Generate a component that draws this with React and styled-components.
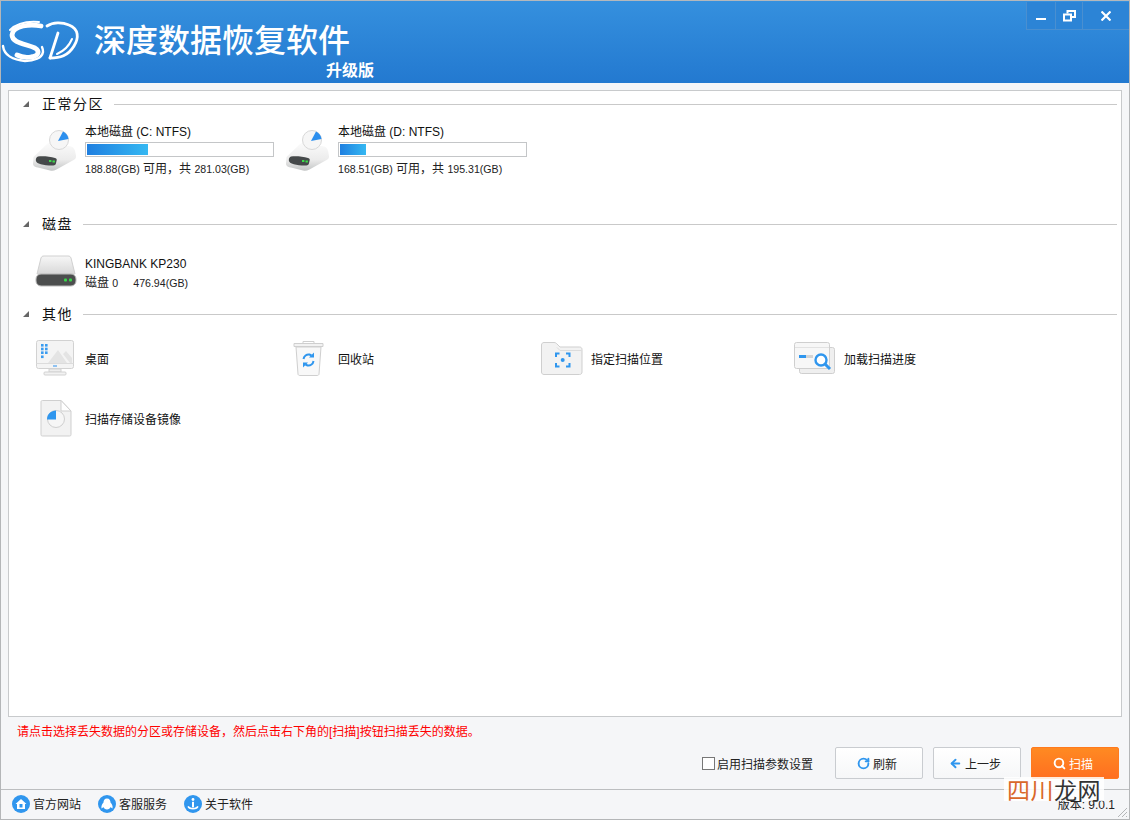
import React from 'react';
import styled, { createGlobalStyle } from 'styled-components';
import { Search, ArrowLeft, RotateCw } from 'lucide-react';

const GlobalStyle = createGlobalStyle`
    html, body {
        margin: 0;
        padding: 0;
        background: #f5f6f8;
    }
    * {
        box-sizing: border-box;
    }
`;

const Window = styled.div`
    position: relative;
    display: flex;
    flex-direction: column;
    width: 1130px;
    height: 820px;
    overflow: hidden;
    background: #f5f6f8;
    color: #111;
    font-family: "Liberation Sans", "Noto Sans CJK SC", sans-serif;
    font-size: 12px;
    border-left: 1px solid #b4b6b8;
    border-right: 1px solid #b4b6b8;
    border-bottom: 1px solid #b4b6b8;
`;

const Header = styled.header`
    display: flex;
    flex: 0 0 83px;
    padding-top: 1px;
    border-top: 1px solid #b4b8bc;
    background: linear-gradient(#3590de, #2379d0);
    color: #fff;
`;

const Logo = styled.svg`
    flex: 0 0 auto;
    width: 82px;
    height: 44px;
    margin-top: 18px;
`;

const TitleBlock = styled.div`
    display: flex;
    flex-direction: column;
    align-items: flex-end;
    width: 280px;
    margin-left: 11px;
    padding-top: 14px;
`;

const Title = styled.h1`
    align-self: flex-start;
    margin: 0;
    font-family: "Noto Sans CJK SC", sans-serif;
    font-size: 32px;
    line-height: 44px;
    font-weight: 500;
    white-space: nowrap;
`;

const Edition = styled.span`
    margin-top: -1px;
    font-family: "Noto Sans CJK SC", sans-serif;
    font-size: 16px;
    line-height: 20px;
    font-weight: 700;
`;

const Controls = styled.div`
    display: flex;
    height: 28px;
    margin-left: auto;
    border: 1px solid #4a8fd0;
    border-top: 0;
    border-right: 0;
    background: #2c84d6;
`;

const ControlButton = styled.div`
    display: flex;
    align-items: center;
    justify-content: center;
    width: ${props => props.$width}px;
    border-left: ${props => props.$first ? 0 : '1px solid #4a8fd0'};
`;

const Panel = styled.main`
    display: flex;
    flex-direction: column;
    height: 627px;
    margin: 7px 7px 0 7px;
    background: #fff;
    border: 1px solid #c8cacc;
`;

const Section = styled.section`
    height: ${props => props.$height}px;
`;

const SectionHead = styled.div`
    display: flex;
    align-items: center;
    height: 24px;
    padding-left: 14px;
    padding-right: 4px;
`;

const Triangle = styled.i`
    display: block;
    width: 0;
    height: 0;
    border-left: 6px solid transparent;
    border-bottom: 6px solid #666;
    margin-right: 13px;
    margin-top: 1px;
`;

const SectionTitle = styled.h2`
    margin: 0 10px 0 0;
    font-size: 14px;
    font-weight: 400;
    letter-spacing: 1.5px;
    font-family: "Noto Sans CJK SC", sans-serif;
    color: #111;
`;

const Rule = styled.div`
    flex: 1;
    height: 1px;
    margin-top: 2px;
    background: #c9c9c9;
`;

const Grid = styled.div`
    display: grid;
    grid-template-columns: repeat(4, 253px);
    padding-left: 22px;
    padding-top: ${props => props.$top || 0}px;
`;

const Drive = styled.div`
    display: flex;
    align-items: flex-start;
    height: 60px;
`;

const Place = styled.div`
    display: flex;
    align-items: center;
    height: 60px;
`;

const IconSlot = styled.div`
    flex: 0 0 54px;
    display: flex;
    justify-content: center;
    padding-right: 4px;
    margin-top: ${props => props.$top || 0}px;
`;

const DriveInfo = styled.div`
    width: 189px;
    padding-top: ${props => props.$top || 0}px;
`;

const DriveName = styled.div`
    line-height: 16px;
    color: #111;
`;

const Meter = styled.div`
    height: 15px;
    margin-top: 2px;
    padding: 1px;
    background: #fff;
    border: 1px solid #c4c6c8;
`;

const MeterFill = styled.div`
    height: 100%;
    background: linear-gradient(90deg, #1f7fe0, #35b8f2);
`;

const DriveStat = styled.div`
    margin-top: ${props => props.$gap}px;
    line-height: 16px;
    color: #222;
    white-space: pre;
`;

const Num = styled.span`
    font-size: 10.6px;
    margin-left: ${props => props.$left || 0}px;
`;

const Actions = styled.div`
    flex: 1;
    display: flex;
    flex-direction: column;
    padding: 7px 10px 0 16px;
`;

const Notice = styled.p`
    margin: 0;
    line-height: 17px;
    color: #f00;
    white-space: nowrap;
`;

const ActionRow = styled.div`
    display: flex;
    align-items: center;
    justify-content: flex-end;
    gap: 10px;
    margin-top: 6px;
`;

const CheckLabel = styled.label`
    display: flex;
    align-items: center;
    margin-right: 12px;
    color: #222;
`;

const CheckBox = styled.span`
    display: block;
    width: 13px;
    height: 13px;
    margin-right: 2px;
    background: #fff;
    border: 1px solid #777;
`;

const Button = styled.div`
    display: flex;
    align-items: center;
    justify-content: center;
    gap: 3px;
    width: 88px;
    height: 32px;
    padding-right: 4px;
    border-radius: 2px;
    border: 1px solid ${props => props.$primary ? '#ff7a1e' : '#c9ccd0'};
    background: ${props => props.$primary
        ? 'linear-gradient(#ff8a22, #ff6f20)'
        : 'linear-gradient(#ffffff, #f6f7f8)'};
    color: ${props => props.$primary ? '#fff' : '#222'};
`;

const StatusBar = styled.footer`
    display: flex;
    align-items: center;
    flex: 0 0 30px;
    padding: 0 14px 2px 11px;
    border-top: 1px solid #bcbec0;
`;

const StatusLink = styled.div`
    display: flex;
    align-items: center;
    gap: 3px;
    width: 86px;
    color: #222;
`;

const Version = styled.span`
    margin-left: auto;
    color: #222;
`;

const Grip = styled.svg`
    position: absolute;
    right: 1px;
    bottom: 1px;
    width: 11px;
    height: 11px;
`;

const Watermark = styled.div`
    position: absolute;
    left: 1003px;
    top: 777px;
    padding: 0 3px;
    height: 24px;
    background: rgba(255, 255, 255, 0.85);
    font-family: "Noto Sans CJK SC", sans-serif;
    font-size: 23px;
    line-height: 24px;
    letter-spacing: 0.5px;
    color: #333;
    b {
        font-weight: 400;
        color: #d9682a;
    }
`;

const SdLogo = () => (
    <Logo viewBox="0 0 82 44" fill="none" stroke="#fff" strokeLinecap="round">
        <path d="M40 6C30 4 12 5 11 15c0 8 14 9 23 13 5 3 4 8-4 9-5 1-10 0-14-2" strokeWidth="4.8" />
        <path d="M2 26c1 9 10 14 22 15 9 0 17-3 18-9 0-2 0-3-1-5" strokeWidth="2.4" />
        <path d="M9 10C15 4 26 1 38 2" strokeWidth="2" />
        <path d="M57 13 49 38" strokeWidth="2.8" />
        <path d="M49 38c10 0 18-2 24-12 5-8 5-17-5-21-7-3-16-3-22 1" strokeWidth="2.8" />
        <path d="M56 34c7-3 12-8 15-15" strokeWidth="2" />
    </Logo>
);

const PartitionIcon = () => (
    <svg width="48" height="44" viewBox="0 0 48 44">
        <defs>
            <linearGradient id="partBody" x1="0" y1="0" x2="0" y2="1">
                <stop offset="0" stopColor="#fbfbfb" />
                <stop offset=".6" stopColor="#ececec" />
                <stop offset="1" stopColor="#c4c6c6" />
            </linearGradient>
        </defs>
        <path d="M1.500 29 15 16c1.500-1.300 3-1.500 5-1.200l18 3.500c3 .6 4 2 5 4.500l1 5c.3 2-.5 3-2 4l-18 10c-2 1-4 1-6 .7l-10-2.500C2 39 1 37.500 1 35.500Z" fill="url(#partBody)" />
        <path d="M6 28.500c5-.6 12 0 17 1.500 2 .6 2 1.500 1.500 3l-.7 3c-.5 1.300-2 1.500-4 1.500-4 0-8-.5-11-1.300-3-.7-5-2-5-4 0-2 1-3.500 2.200-3.700Z" fill="#45494a" />
        <rect x="17" y="32" width="2.400" height="2" fill="#3ddc4b" />
        <rect x="20.500" y="32.500" width="2.400" height="2" fill="#3ddc4b" />
        <circle cx="27" cy="12" r="9.500" fill="#f6f6f6" stroke="#d8d8d8" />
        <path d="M26 13 31 3.500c3 1.300 5 4 5.500 7.500Z" fill="#2c8fee" />
    </svg>
);

const DiskIcon = () => (
    <svg width="42" height="32" viewBox="0 0 42 32">
        <defs>
            <linearGradient id="diskBody" x1="0" y1="0" x2="0" y2="1">
                <stop offset="0" stopColor="#f7f7f7" />
                <stop offset="1" stopColor="#d8d8d8" />
            </linearGradient>
        </defs>
        <path d="M6 3c.4-1.400 1.600-2 3-2h24c1.400 0 2.600.6 3 2l4 16H2Z" fill="url(#diskBody)" stroke="#d0d0d0" />
        <rect x="1" y="19" width="40" height="12" rx="5" fill="#4c4e4e" stroke="#bbb" />
        <rect x="29" y="23.500" width="3" height="3" rx="1" fill="#38d84a" />
        <rect x="34" y="23.500" width="3" height="3" rx="1" fill="#38d84a" />
    </svg>
);

const DesktopIcon = () => (
    <svg width="40" height="36" viewBox="0 0 40 36">
        <rect x=".5" y=".5" width="37" height="28" rx="2" fill="#f4f4f4" stroke="#d2d2d2" />
        <path d="M.5 23.500h37" stroke="#dcdcdc" />
        <path d="M12 23 22 10l9 13ZM27 14l3-3 6 7v5h-2Z" fill="#e4e4e4" />
        {[4, 7.700, 11.400].map(y => (
            <g key={y} fill="#3a9cf0">
                <rect x="5" y={y} width="2.600" height="2.600" />
                <rect x="9" y={y} width="2.600" height="2.600" />
            </g>
        ))}
        <rect x="5" y="15.500" width="2.600" height="2.600" fill="#3a9cf0" />
        <rect x="17" y="25.500" width="4" height="1" fill="#2c8fee" />
        <path d="M13 29h12v3H13Z" fill="#eee" stroke="#d2d2d2" />
        <rect x="8" y="32" width="22" height="3" rx="1" fill="#f2f2f2" stroke="#d2d2d2" />
    </svg>
);

const RecycleIcon = () => (
    <svg width="32" height="36" viewBox="0 0 32 36">
        <path d="M10 3V1.500h11V3" fill="none" stroke="#cfcfcf" />
        <path d="M1 3.500h29v3H1Z" fill="#f2f2f2" stroke="#cfcfcf" />
        <path d="M3 7h25l-2 27c0 1-1 1.500-2 1.500H7c-1 0-2-.5-2-1.500Z" fill="#f8f8f8" stroke="#cfcfcf" />
        <path d="M10.500 19c.5-3 3-5 6-4.500l2 1" fill="none" stroke="#2f96ee" strokeWidth="2" />
        <path d="M21 12.500v5h-5Z" fill="#2f96ee" />
        <path d="M20.500 21c-.5 3-3 5-6 4.500l-2-1" fill="none" stroke="#2f96ee" strokeWidth="2" />
        <path d="M10 27.500v-5h5Z" fill="#2f96ee" />
    </svg>
);

const FolderIcon = () => (
    <svg width="42" height="33" viewBox="0 0 42 33">
        <path d="M.5 3C.5 1.500 1.500.5 3 .5h10c1.500 0 2 .5 3 1.500l3 3h19.500c1.500 0 2.500 1 2.500 2.500V30c0 1.500-1 2.500-2.500 2.500H3C1.500 32.500.5 31.500.5 30Z" fill="#f2f2f2" stroke="#cfcfcf" />
        <path d="M16 5.500 19 8.500h21.500" fill="none" stroke="#dcdcdc" />
        <path d="M15 15v-3.500h3.500M25 11.500h3.500V15M28.500 21v3.500H25M18.500 24.500H15V21" fill="none" stroke="#2f96ee" strokeWidth="2" />
        <circle cx="21.700" cy="18" r="2" fill="#2f96ee" />
    </svg>
);

const LoadIcon = () => (
    <svg width="42" height="33" viewBox="0 0 42 33">
        <rect x="5.500" y="5.500" width="35" height="26" rx="2" fill="#efefef" stroke="#cfcfcf" />
        <rect x=".5" y=".5" width="35" height="26" rx="2" fill="#f7f7f7" stroke="#cfcfcf" />
        <path d="M1 5.500h34" stroke="#e2e2e2" />
        <rect x="5" y="13" width="7" height="3" fill="#2f96ee" />
        <rect x="12" y="13" width="7" height="3" fill="#d4d4d4" />
        <circle cx="27" cy="18" r="5.500" fill="#fff" stroke="#2f96ee" strokeWidth="2.400" />
        <path d="m31 22 5 5" stroke="#2f96ee" strokeWidth="3" />
    </svg>
);

const ImageIcon = () => (
    <svg width="32" height="37" viewBox="0 0 32 37">
        <path d="M1 2c0-1 .5-1.500 1.500-1.500H21L31 11v23.500c0 1-.5 1.500-1.500 1.500h-27C1.500 36 1 35.500 1 34.500Z" fill="#f2f2f2" stroke="#cfcfcf" />
        <path d="M21 .5V11h10Z" fill="#fff" stroke="#cfcfcf" />
        <circle cx="16" cy="19" r="8.500" fill="#f6f6f6" stroke="#cfcfcf" />
        <path d="M7 19.500C7 14 11 10.500 16 10.500v9Z" fill="#2f96ee" />
    </svg>
);

const HomeGlyph = () => (
    <path d="M9 4 3.500 9H5v5h8V9h1.500ZM7.500 12.500V9h3v3.500Z" fill="#fff" fillRule="evenodd" />
);

const ServiceGlyph = () => (
    <path d="M9 3.500c2.500 0 3.500 2 3.500 4 1.500 1.500 2.500 3.500 2 6-1-.5-1.500-1-1.800-1.500-.7 1.500-2 2.500-3.700 2.500S6 13.500 5.300 12c-.3.500-.8 1-1.800 1.500-.5-2.500.5-4.500 2-6 0-2 1-4 3.500-4Z" fill="#fff" />
);

const InfoGlyph = () => (
    <g fill="#fff">
        <circle cx="9" cy="4.500" r="1.400" />
        <rect x="8" y="6.800" width="2" height="5.500" />
        <path d="M3.500 11.500c0 2 2.500 3 5.500 3s5.500-1 5.500-3l-1.500-.5c0 1-2 1.800-4 1.800S5 12 5 11Z" />
    </g>
);

const StatusIcon = ({ children }) => (
    <svg width="18" height="18" viewBox="0 0 18 18">
        <circle cx="9" cy="9" r="9" fill="#3096ee" />
        {children}
    </svg>
);

const drives = [
    { name: '本地磁盘 (C: NTFS)', used: 33, free: '188.88(GB)', total: '281.03(GB)' },
    { name: '本地磁盘 (D: NTFS)', used: 14, free: '168.51(GB)', total: '195.31(GB)' },
];

const places = [
    { name: '桌面', icon: <DesktopIcon /> },
    { name: '回收站', icon: <RecycleIcon /> },
    { name: '指定扫描位置', icon: <FolderIcon /> },
    { name: '加载扫描进度', icon: <LoadIcon /> },
    { name: '扫描存储设备镜像', icon: <ImageIcon /> },
];

const Head = ({ title }) => (
    <SectionHead>
        <Triangle />
        <SectionTitle>{title}</SectionTitle>
        <Rule />
    </SectionHead>
);

const App = () => {
    return (
        <Window>
            <GlobalStyle />
            <Header>
                <SdLogo />
                <TitleBlock>
                    <Title>深度数据恢复软件</Title>
                    <Edition>升级版</Edition>
                </TitleBlock>
                <Controls>
                    <ControlButton $width={28} $first>
                        <svg width="10" height="10" viewBox="0 0 10 10"><rect y="7" width="10" height="2" fill="#fff" /></svg>
                    </ControlButton>
                    <ControlButton $width={27}>
                        <svg width="13" height="12" viewBox="0 0 13 12" fill="none" stroke="#fff" strokeWidth="2">
                            <path d="M4.500 3.500V1h7.500v6H9" />
                            <rect x="1" y="4.500" width="7" height="6" />
                        </svg>
                    </ControlButton>
                    <ControlButton $width={47}>
                        <svg width="10" height="10" viewBox="0 0 10 10" stroke="#fff" strokeWidth="2.200">
                            <path d="m.5.500 9 9M9.500.500l-9 9" />
                        </svg>
                    </ControlButton>
                </Controls>
            </Header>
            <Panel>
                <Section $height={120}>
                    <Head title="正常分区" />
                    <Grid>
                        {drives.map(drive => (
                            <Drive key={drive.name}>
                                <IconSlot $top={13}><PartitionIcon /></IconSlot>
                                <DriveInfo $top={9}>
                                    <DriveName>{drive.name}</DriveName>
                                    <Meter><MeterFill style={{ width: `${drive.used}%` }} /></Meter>
                                    <DriveStat $gap={4}><Num>{drive.free}</Num> 可用，共 <Num>{drive.total}</Num></DriveStat>
                                </DriveInfo>
                            </Drive>
                        ))}
                    </Grid>
                </Section>
                <Section $height={90}>
                    <Head title="磁盘" />
                    <Grid>
                        <Drive>
                            <IconSlot $top={20}><DiskIcon /></IconSlot>
                            <DriveInfo $top={21}>
                                <DriveName>KINGBANK KP230</DriveName>
                                <DriveStat $gap={3}>磁盘 <Num>0</Num><Num $left={15}>476.94(GB)</Num></DriveStat>
                            </DriveInfo>
                        </Drive>
                    </Grid>
                </Section>
                <Section $height={200}>
                    <Head title="其他" />
                    <Grid $top={3}>
                        {places.map(place => (
                            <Place key={place.name}>
                                <IconSlot>{place.icon}</IconSlot>
                                <span>{place.name}</span>
                            </Place>
                        ))}
                    </Grid>
                </Section>
            </Panel>
            <Actions>
                <Notice>请点击选择丢失数据的分区或存储设备，然后点击右下角的[扫描]按钮扫描丢失的数据。</Notice>
                <ActionRow>
                    <CheckLabel><CheckBox />启用扫描参数设置</CheckLabel>
                    <Button><RotateCw size={13} color="#2f96ee" strokeWidth={3.5} />刷新</Button>
                    <Button><ArrowLeft size={13} color="#2f96ee" strokeWidth={3.5} />上一步</Button>
                    <Button $primary><Search size={13} color="#fff" strokeWidth={3.5} />扫描</Button>
                </ActionRow>
            </Actions>
            <StatusBar>
                <StatusLink><StatusIcon><HomeGlyph /></StatusIcon>官方网站</StatusLink>
                <StatusLink><StatusIcon><ServiceGlyph /></StatusIcon>客服服务</StatusLink>
                <StatusLink><StatusIcon><InfoGlyph /></StatusIcon>关于软件</StatusLink>
                <Version>版本: 9.0.1</Version>
            </StatusBar>
            <Grip viewBox="0 0 11 11" stroke="#b4b6b8">
                <path d="M1 10 10 1M5 10l5-5M9 10l1-1" />
            </Grip>
            <Watermark><b>四川</b>龙网</Watermark>
        </Window>
    );
};

export default App;
